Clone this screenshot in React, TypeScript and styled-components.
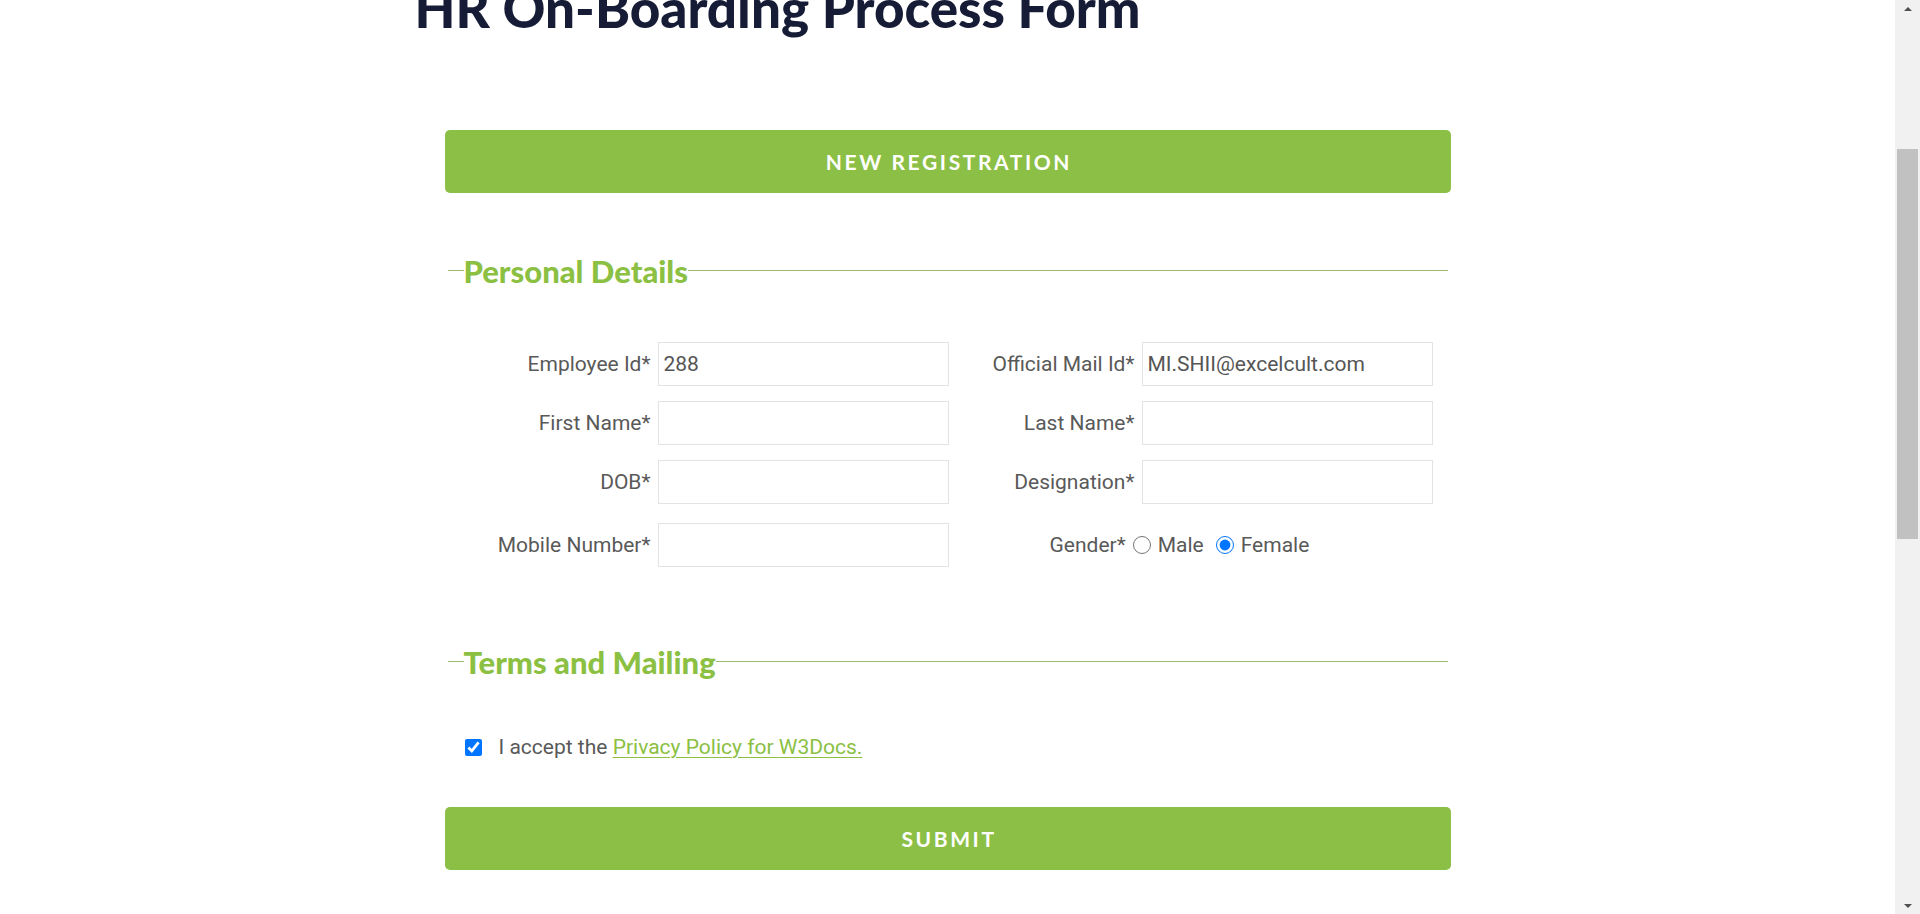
import React, { useLayoutEffect, useRef } from 'react';
import styled, { createGlobalStyle } from 'styled-components';

const GlobalStyle = createGlobalStyle`
  html, body { height: 100%; }
  body {
    margin: 0;
    overflow: hidden;
    background: #ffffff;
    font-family: Roboto, "Liberation Sans", sans-serif;
  }
`;

const Frame = styled.div`
  display: flex;
  height: 100vh;
`;

const Viewport = styled.div`
  flex: 1;
  overflow-y: auto;
  scrollbar-width: none;
  &::-webkit-scrollbar { display: none; }
`;

const ScrollBar = styled.aside`
  width: 25px;
  flex: none;
  display: flex;
  flex-direction: column;
  background: #f1f1f1;
`;

const ScrollArrow = styled.div<{ $down?: boolean }>`
  height: 17px;
  flex: none;
  display: flex;
  align-items: center;
  justify-content: center;
  &::before {
    content: '';
    width: 0;
    height: 0;
    border-left: 4px solid transparent;
    border-right: 4px solid transparent;
    ${(p) =>
      p.$down
        ? 'border-top: 4px solid #505050;'
        : 'border-bottom: 4px solid #505050;'}
  }
`;

const ScrollTrack = styled.div`
  flex: 1;
`;

const ScrollThumb = styled.div`
  height: 390px;
  margin: 132px 2px 0;
  background: #c1c1c1;
`;

const Page = styled.div`
  min-height: 2062px;
  padding-top: 285px;
  box-sizing: border-box;
`;

const Container = styled.main`
  width: 1066px;
  margin: 0 auto;
`;

const Title = styled.h1`
  margin: 0;
  font-family: Lato, "Liberation Sans", sans-serif;
  font-weight: 900;
  font-size: 53px;
  line-height: 1.2;
  color: #161c36;
`;

const Form = styled.form`
  margin: 90px 30px 0;
`;

const ActionButton = styled.button<{ $mt: number }>`
  display: block;
  width: 100%;
  height: 63px;
  margin-top: ${(p) => p.$mt}px;
  padding: 0 0 0 3px;
  border: 0;
  border-radius: 5px;
  background: #8cbf45;
  color: #ffffff;
  font-family: Lato, "Liberation Sans", sans-serif;
  font-weight: 700;
  font-size: 21px;
  letter-spacing: 2.6px;
  text-transform: uppercase;
  cursor: pointer;
`;

const Fieldset = styled.fieldset<{ $mt: number }>`
  margin: ${(p) => p.$mt}px 3px 0;
  padding: 0;
  min-width: 0;
  border: 0;
  border-top: 1px solid #9ab96a;
`;

const Legend = styled.legend`
  margin-left: 16px;
  padding: 0;
  font-family: Lato, "Liberation Sans", sans-serif;
  font-weight: 900;
  font-size: 31px;
  line-height: 38px;
  color: #8bc043;
`;

const FieldGrid = styled.div`
  display: grid;
  grid-template-columns: 160px 291px 179px 291px;
  grid-auto-rows: 44px;
  column-gap: 7px;
  row-gap: 15px;
  align-items: center;
  margin: 52px 0 0 43px;
`;

const FieldLabel = styled.label<{ $shift?: number }>`
  text-align: right;
  font-size: 21px;
  color: #595959;
  margin-top: ${(p) => p.$shift ?? 0}px;
`;

const TextInput = styled.input<{ $shift?: number }>`
  box-sizing: border-box;
  height: 44px;
  width: 100%;
  margin: ${(p) => p.$shift ?? 0}px 0 0;
  padding: 0 5px;
  border: 1px solid #e3e3e3;
  outline: none;
  font-family: Roboto, "Liberation Sans", sans-serif;
  font-size: 21px;
  color: #555555;
  background: #ffffff;
`;

const GenderGroup = styled.div<{ $shift?: number }>`
  grid-column: 3 / span 2;
  display: flex;
  align-items: center;
  padding-left: 94px;
  margin-top: ${(p) => p.$shift ?? 0}px;
  font-size: 21px;
  color: #595959;
`;

const GenderTitle = styled.span`
  margin-right: 7px;
`;

const Choice = styled.input`
  width: 18px;
  height: 18px;
  margin: 0;
`;

const ChoiceLabel = styled.label<{ $gap: number }>`
  margin: 0 ${(p) => p.$gap}px 0 7px;
`;

const TermsRow = styled.label`
  display: flex;
  align-items: center;
  margin: 54px 0 0 17px;
  font-size: 21px;
  line-height: 25px;
  color: #595959;
`;

const CheckBox = styled.input`
  width: 17px;
  height: 17px;
  margin: 0 17px 0 0;
`;

const PolicyLink = styled.a`
  color: #8bc043;
  text-decoration: underline;
  text-decoration-thickness: 1px;
  text-underline-offset: 3px;
  margin-left: 0.25em;
`;

export default function App() {
  const viewRef = useRef<HTMLDivElement>(null);

  useLayoutEffect(() => {
    if (viewRef.current) viewRef.current.scrollTop = 309;
  }, []);

  return (
    <>
      <GlobalStyle />
      <Frame>
        <Viewport ref={viewRef}>
          <Page>
            <Container>
              <Title>HR On-Boarding Process Form</Title>
              <Form onSubmit={(e) => e.preventDefault()}>
                <ActionButton type="button" $mt={0}>New Registration</ActionButton>

                <Fieldset $mt={59}>
                  <Legend>Personal Details</Legend>
                  <FieldGrid>
                    <FieldLabel htmlFor="empId">Employee Id*</FieldLabel>
                    <TextInput id="empId" defaultValue="288" />
                    <FieldLabel htmlFor="mail">Official Mail Id*</FieldLabel>
                    <TextInput id="mail" defaultValue="MI.SHII@excelcult.com" />

                    <FieldLabel htmlFor="first">First Name*</FieldLabel>
                    <TextInput id="first" />
                    <FieldLabel htmlFor="last">Last Name*</FieldLabel>
                    <TextInput id="last" />

                    <FieldLabel htmlFor="dob">DOB*</FieldLabel>
                    <TextInput id="dob" />
                    <FieldLabel htmlFor="desig">Designation*</FieldLabel>
                    <TextInput id="desig" />

                    <FieldLabel htmlFor="mobile" $shift={8}>Mobile Number*</FieldLabel>
                    <TextInput id="mobile" $shift={8} />
                    <GenderGroup $shift={8}>
                      <GenderTitle>Gender*</GenderTitle>
                      <Choice type="radio" name="gender" id="male" />
                      <ChoiceLabel htmlFor="male" $gap={12}>Male</ChoiceLabel>
                      <Choice type="radio" name="gender" id="female" defaultChecked />
                      <ChoiceLabel htmlFor="female" $gap={0}>Female</ChoiceLabel>
                    </GenderGroup>
                  </FieldGrid>
                </Fieldset>

                <Fieldset $mt={80}>
                  <Legend>Terms and Mailing</Legend>
                  <TermsRow>
                    <CheckBox type="checkbox" defaultChecked />
                    I accept the
                    <PolicyLink href="#">Privacy Policy for W3Docs.</PolicyLink>
                  </TermsRow>
                </Fieldset>

                <ActionButton type="submit" $mt={47}>Submit</ActionButton>
              </Form>
            </Container>
          </Page>
        </Viewport>
        <ScrollBar aria-hidden="true">
          <ScrollArrow />
          <ScrollTrack>
            <ScrollThumb />
          </ScrollTrack>
          <ScrollArrow $down />
        </ScrollBar>
      </Frame>
    </>
  );
}
